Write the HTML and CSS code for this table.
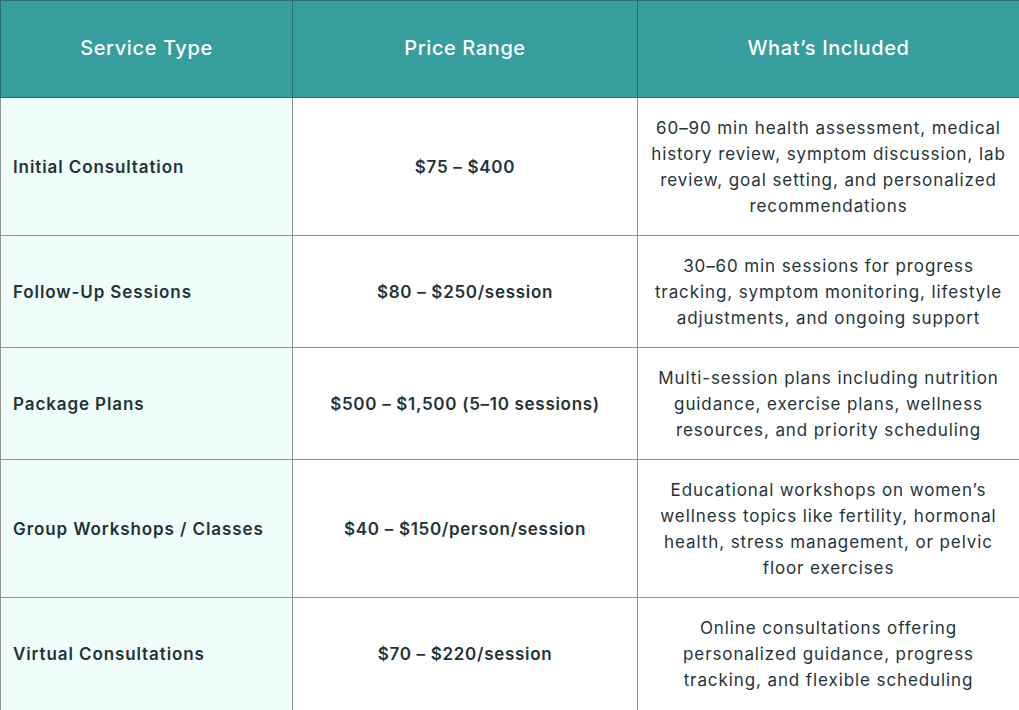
FILE: index.html
```html
<!DOCTYPE html>
<html lang="en">
<head>
<meta charset="utf-8">
<title>Pricing</title>
<link rel="stylesheet" href="styles.css">
</head>
<body>
<table class="pricing">
  <colgroup>
    <col class="c1"><col class="c2"><col class="c3">
  </colgroup>
  <thead>
    <tr>
      <th>Service Type</th>
      <th>Price Range</th>
      <th>What’s Included</th>
    </tr>
  </thead>
  <tbody>
    <tr class="tall">
      <td class="service">Initial Consultation</td>
      <td class="price">$75 – $400</td>
      <td class="desc">60–90 min health assessment, medical history review, symptom discussion, lab review, goal setting, and personalized recommendations</td>
    </tr>
    <tr>
      <td class="service">Follow-Up Sessions</td>
      <td class="price">$80 – $250/session</td>
      <td class="desc">30–60 min sessions for progress tracking, symptom monitoring, lifestyle adjustments, and ongoing support</td>
    </tr>
    <tr>
      <td class="service">Package Plans</td>
      <td class="price">$500 – $1,500 (5–10 sessions)</td>
      <td class="desc">Multi-session plans including nutrition guidance, exercise plans, wellness resources, and priority scheduling</td>
    </tr>
    <tr class="tall">
      <td class="service">Group Workshops / Classes</td>
      <td class="price">$40 – $150/person/session</td>
      <td class="desc">Educational workshops on women’s wellness topics like fertility, hormonal health, stress management, or pelvic floor exercises</td>
    </tr>
    <tr class="last">
      <td class="service">Virtual Consultations</td>
      <td class="price">$70 – $220/session</td>
      <td class="desc">Online consultations offering personalized guidance, progress tracking, and flexible scheduling</td>
    </tr>
  </tbody>
</table>
</body>
</html>
```
FILE: styles.css
```css
html, body {
  margin: 0;
  padding: 0;
  background: #ffffff;
}
body {
  font-family: Inter, "Noto Sans", sans-serif;
  color: #1f3438;
}
.pricing {
  width: 1019px;
  border-collapse: collapse;
  table-layout: fixed;
}
.c1 { width: 292px; }
.c2 { width: 345px; }
.c3 { width: 382px; }
.pricing th {
  background: #369e9d;
  color: #ffffff;
  font-weight: 500;
  font-size: 20px;
  letter-spacing: 0.6px;
  height: 97px;
  padding: 0 12px 3px;
  box-sizing: border-box;
  border: 1px solid #2d6e6c;
  text-align: center;
}
.pricing td {
  border: 1px solid #8f9494;
  padding: 16px 14px;
  font-size: 17px;
  letter-spacing: 0.9px;
  line-height: 26px;
  vertical-align: middle;
  box-sizing: border-box;
}
.pricing tbody tr { height: 112px; }
.pricing tbody tr.tall { height: 138px; }
.pricing tbody tr.last { height: 113px; }
.service {
  background: #f0fefb;
  font-weight: 600;
  text-align: left;
  padding-left: 12px !important;
}
.price {
  font-weight: 600;
  text-align: center;
  letter-spacing: 0.7px !important;
}
.desc {
  font-weight: 400;
  text-align: center;
  padding-left: 10px !important;
  padding-right: 10px !important;
}
```
